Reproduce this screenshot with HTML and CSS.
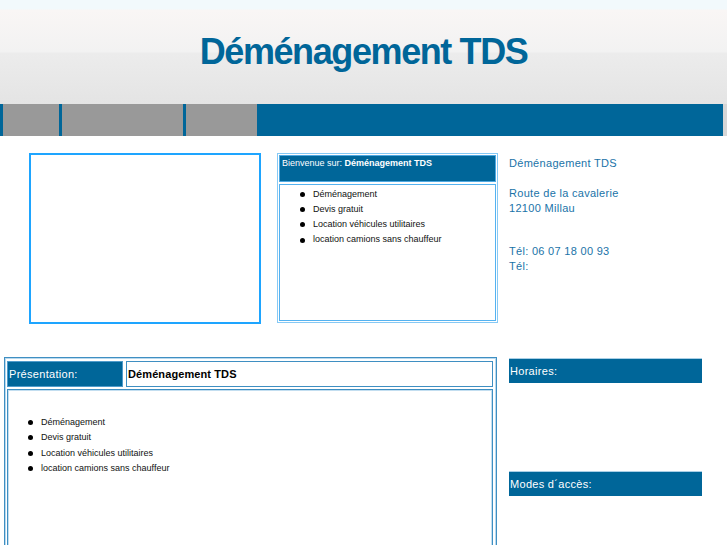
FILE: index.html
```html
<!DOCTYPE html>
<html lang="fr">
<head>
<meta charset="utf-8">
<title>Déménagement TDS</title>
<link rel="stylesheet" href="styles.css">
</head>
<body>
<div class="header">
  <h1 class="title">Déménagement TDS</h1>
</div>
<div class="nav">
  <span class="tab t1"></span>
  <span class="tab t2"></span>
  <span class="tab t3"></span>
  <span class="fill"></span>
  <span class="edge"></span>
</div>
<div class="main">
  <div class="row top">
    <div class="left top-left">
      <div class="photo"></div>
      <div class="welcome">
        <div class="welcome-head">Bienvenue sur: <b>Déménagement TDS</b></div>
        <div class="welcome-body">
          <ul class="list list-welcome">
            <li>Déménagement</li>
            <li>Devis gratuit</li>
            <li>Location véhicules utilitaires</li>
            <li>location camions sans chauffeur</li>
          </ul>
        </div>
      </div>
    </div>
    <div class="right contact">
      <p class="line">Déménagement TDS</p>
      <p class="line blank">&nbsp;</p>
      <p class="line">Route de la cavalerie</p>
      <p class="line">12100 Millau</p>
      <p class="line tel">Tél: 06 07 18 00 93</p>
      <p class="line">Tél:</p>
    </div>
  </div>
  <div class="row bottom">
    <div class="left">
      <div class="pres">
        <div class="pres-head">
          <div class="pres-label">Présentation:</div>
          <div class="pres-name">Déménagement TDS</div>
        </div>
        <div class="pres-body">
          <ul class="list list-pres">
            <li>Déménagement</li>
            <li>Devis gratuit</li>
            <li>Location véhicules utilitaires</li>
            <li>location camions sans chauffeur</li>
          </ul>
        </div>
      </div>
    </div>
    <div class="right side">
      <div class="bar">Horaires:</div>
      <div class="bar modes">Modes d´accès:</div>
    </div>
  </div>
</div>
</body>
</html>
```
FILE: styles.css
```css
html, body {
  margin: 0;
  padding: 0;
  background: #ffffff;
  font-family: "Liberation Sans", Arial, sans-serif;
}

.header {
  height: 104px;
  background: linear-gradient(to bottom,
    #f2f9fc 0px, #f2f9fc 9px,
    #f9f6f5 10px, #f2f2f2 52px,
    #ececec 53px, #e4e4e4 104px);
  text-align: center;
}

.title {
  margin: 0;
  padding-top: 31px;
  font-size: 36px;
  line-height: 41px;
  font-weight: bold;
  letter-spacing: -1.4px;
  color: #006699;
}

.nav {
  display: flex;
  height: 32px;
  background: #006699;
}

.tab {
  background: #999999;
  margin-left: 3px;
}
.t1 { width: 56px; }
.t2 { width: 121px; }
.t3 { width: 71px; }
.fill { flex: 1; }
.edge { width: 4px; background: #d6d6d6; }

.row {
  display: flex;
}
.row.top { height: 221px; }

.left { width: 500px; flex-shrink: 0; }
.right { width: 193px; margin-left: 9px; flex-shrink: 0; }

.top-left {
  display: flex;
  align-items: flex-start;
  padding-top: 17px;
  box-sizing: border-box;
}

.photo {
  margin-left: 29px;
  width: 232px;
  height: 171px;
  box-sizing: border-box;
  border: 2px solid #1ea5ff;
}

.welcome {
  margin-left: 16px;
  width: 221px;
  height: 170px;
  box-sizing: border-box;
  border: 1px solid #86c9f5;
  padding: 1px;
  display: flex;
  flex-direction: column;
  gap: 2px;
}

.welcome-head {
  height: 27px;
  box-sizing: border-box;
  background: #006699;
  border: 1px solid #4fa9e2;
  color: #ffffff;
  font-size: 9px;
  line-height: 11px;
  padding: 2px 2px 1px;
}

.welcome-body {
  flex: 1;
  border: 1px solid #54b2f0;
}

.list {
  list-style: none;
  margin: 0;
  padding: 0 0 0 33px;
  font-size: 9px;
  line-height: 15.3px;
  color: #111111;
}
.list li {
  display: flex;
  align-items: center;
}
.list li::before {
  content: "";
  flex-shrink: 0;
  width: 5px;
  height: 5px;
  border-radius: 50%;
  background: #000000;
  margin-left: -13px;
  margin-right: 8px;
}
.list-welcome { padding-top: 1.5px; }
.list-pres { padding-top: 25px; }

.contact {
  padding-top: 20px;
  font-size: 11px;
  letter-spacing: 0.3px;
  line-height: 15px;
  color: #1a73a8;
}
.line { margin: 0; }
.tel { margin-top: 28px; }

.pres {
  margin-left: 4px;
  width: 493px;
  height: 200px;
  box-sizing: border-box;
  border: 1px solid #3f8fc2;
  box-shadow: inset 0 0 0 1px #b9d9ee;
  padding: 3px 3px 0 2px;
  display: flex;
  flex-direction: column;
  gap: 2px;
}

.pres-head {
  display: flex;
  gap: 3px;
  height: 26px;
}

.pres-label {
  width: 116px;
  box-sizing: border-box;
  background: #006699;
  border: 1px solid #4f9bcb;
  color: #ffffff;
  font-size: 11px;
  letter-spacing: 0.3px;
  display: flex;
  align-items: center;
  padding-left: 1px;
}

.pres-name {
  flex: 1;
  box-sizing: border-box;
  border: 1px solid #3f8fc2;
  font-size: 11px;
  font-weight: bold;
  letter-spacing: 0.1px;
  color: #000000;
  display: flex;
  align-items: center;
  padding-left: 1px;
}

.pres-body {
  flex: 1;
  border: 1px solid #3f8fc2;
  box-shadow: inset 0 0 0 1px #c3def0;
}

.side {
  padding-top: 1px;
}

.bar {
  height: 25px;
  box-sizing: border-box;
  background: #006699;
  border-top: 1px solid #a9cfe6;
  color: #ffffff;
  font-size: 11px;
  letter-spacing: 0.3px;
  display: flex;
  align-items: center;
  padding-left: 1px;
}
.modes { margin-top: 88px; }
```
